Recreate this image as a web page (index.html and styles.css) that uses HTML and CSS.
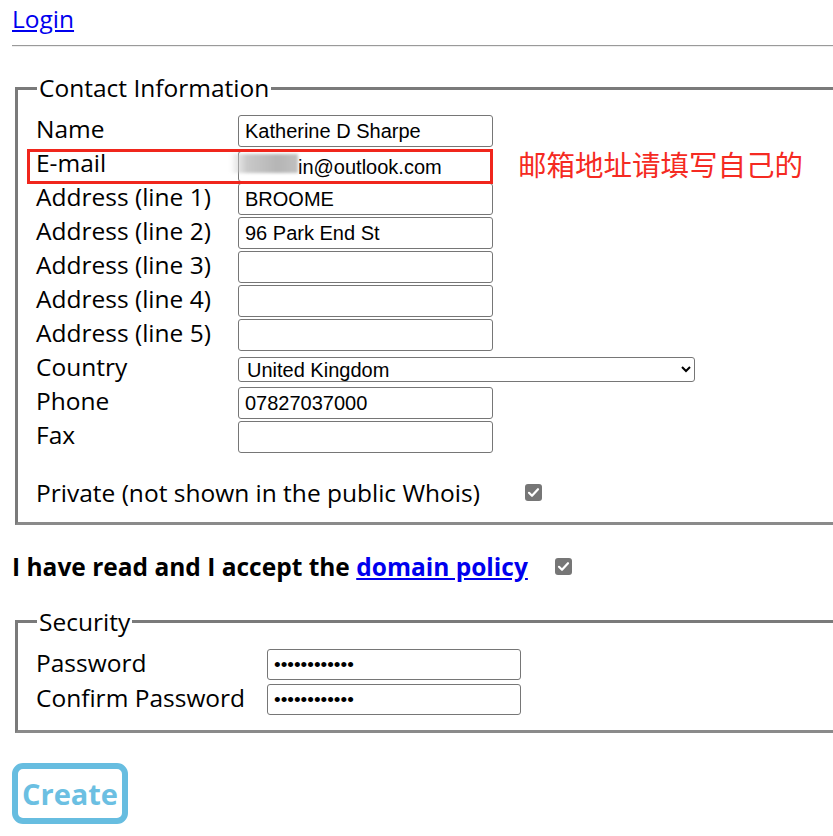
FILE: index.html
```html
<!DOCTYPE html>
<html lang="en">
<head>
    <meta charset="UTF-8">
    <title>Create contact</title>
    <link rel="stylesheet" href="styles.css">
</head>
<body>
    <a href="#" class="login-link">Login</a>
    <hr class="divider">

    <form class="contact-form">
        <!-- Contact Information -->
        <fieldset class="group">
            <legend>Contact Information</legend>
            <div class="rows">
                <label>Name</label>
                <input type="text" value="Katherine D Sharpe">

                <label>E-mail</label>
                <div class="email-cell">
                    <input type="text" class="email-input" value="in@outlook.com">
                    <span class="blur-mask"></span>
                </div>

                <label>Address (line 1)</label>
                <input type="text" value="BROOME">

                <label>Address (line 2)</label>
                <input type="text" value="96 Park End St">

                <label>Address (line 3)</label>
                <input type="text">

                <label>Address (line 4)</label>
                <input type="text">

                <label>Address (line 5)</label>
                <input type="text">

                <label>Country</label>
                <select>
                    <option>United Kingdom</option>
                </select>

                <label>Phone</label>
                <input type="text" value="07827037000">

                <label>Fax</label>
                <input type="text">
            </div>

            <div class="private-row">
                <span>Private (not shown in the public Whois)</span>
                <span class="check"><svg viewBox="0 0 17 17" width="17" height="17"><path d="M4 8.8l3 3 6-6.6" fill="none" stroke="#fff" stroke-width="2.2" stroke-linecap="round" stroke-linejoin="round"/></svg></span>
            </div>

            <!-- annotation over the e-mail row -->
            <div class="note-box"></div>
            <div class="note-text">邮箱地址请填写自己的</div>
        </fieldset>

        <div class="policy-row">
            <span>I have read and I accept the <a href="#">domain policy</a></span>
            <span class="check"><svg viewBox="0 0 17 17" width="17" height="17"><path d="M4 8.8l3 3 6-6.6" fill="none" stroke="#fff" stroke-width="2.2" stroke-linecap="round" stroke-linejoin="round"/></svg></span>
        </div>

        <!-- Security -->
        <fieldset class="group security">
            <legend>Security</legend>
            <div class="rows">
                <label>Password</label>
                <input type="password" value="............">

                <label>Confirm Password</label>
                <input type="password" value="............">
            </div>
        </fieldset>

        <button type="button" class="create-button">Create</button>
    </form>
</body>
</html>
```

FILE: styles.css
```css
html, body {
    overflow-x: hidden;
}

body {
    margin: 0;
    padding: 3px 0 0 12px;
    font-family: "Open Sans", "Noto Sans", sans-serif;
    font-size: 24.5px;
    color: #000;
    background-color: white;
}

.login-link {
    display: block;
    width: max-content;
    line-height: 32px;
    color: #0000ee;
    text-decoration: underline;
}

.divider {
    margin: 10px 0 0 0;
    border: none;
    border-top: 1px solid #9a9a9a;
    border-bottom: 1px solid #eeeeee;
}

.group {
    position: relative;
    margin: 25px -30px 0 3px;
    padding: 11px 18px 13px 18px;
    border: 3px solid #7a7a7a;
    border-bottom-color: #8a8a8a;
}

.group legend {
    padding: 0 2px;
    margin-left: 1px;
    line-height: 32px;
}

.rows {
    display: grid;
    grid-template-columns: 202px auto;
    grid-auto-rows: 32px;
    row-gap: 2px;
    align-items: center;
    justify-items: start;
}

.rows label {
    line-height: 32px;
    margin-top: -4px;
}

input[type="text"], input[type="password"] {
    box-sizing: border-box;
    width: 255px;
    height: 31.5px;
    margin: 0;
    padding: 1px 6px 0 6px;
    border: 1px solid #767676;
    border-radius: 3px;
    font-family: "Liberation Sans", Arial, sans-serif;
    font-size: 20px;
    color: #000;
    background-color: white;
}

input[type="password"] {
    font-size: 19px;
}

select {
    box-sizing: border-box;
    width: 457px;
    height: 25px;
    margin: 0;
    padding: 0 4px;
    border: 1px solid #767676;
    border-radius: 3px;
    font-family: "Liberation Sans", Arial, sans-serif;
    font-size: 20px;
    color: #000;
    background-color: white;
}

.email-cell {
    position: relative;
}

.email-input {
    padding-left: 59px !important;
}

.blur-mask {
    position: absolute;
    left: -8px;
    top: 6px;
    width: 68px;
    height: 19px;
    background: linear-gradient(90deg, rgba(200,200,200,0) 0%, #c9c9c9 25%, #b5b5b5 70%, #c0c0c0 100%);
    filter: blur(1.5px);
}

.private-row {
    display: flex;
    align-items: center;
    gap: 45px;
    margin-top: 23.5px;
    line-height: 32px;
}

.check {
    display: inline-flex;
    width: 17px;
    height: 17px;
    background-color: #767676;
    border-radius: 3px;
}

.note-box {
    position: absolute;
    left: 9px;
    top: 45px;
    width: 460px;
    height: 29px;
    border: 3px solid #f0261c;
}

.note-text {
    position: absolute;
    left: 500px;
    top: 42px;
    font-family: "Noto Sans CJK SC", sans-serif;
    font-size: 28.5px;
    line-height: 36px;
    color: #f52a22;
    white-space: nowrap;
}

.policy-row {
    display: flex;
    align-items: center;
    gap: 27px;
    margin-top: 26px;
    font-weight: bold;
    line-height: 32px;
}

.policy-row a {
    color: #0000ee;
    text-decoration: underline;
}

.security {
    margin-top: 23px;
    padding-bottom: 14px;
}

.security .rows {
    grid-template-columns: 231px auto;
    row-gap: 3px;
}

.security input {
    width: 254px;
    height: 30.5px;
}

.create-button {
    margin-top: 30px;
    width: 116px;
    height: 61px;
    border: 6px solid #67bde0;
    border-radius: 11px;
    background-color: white;
    color: #6bbfe2;
    font-family: "Open Sans", "Noto Sans", sans-serif;
    font-size: 29px;
    font-weight: bold;
    padding: 0;
    cursor: pointer;
}
```
